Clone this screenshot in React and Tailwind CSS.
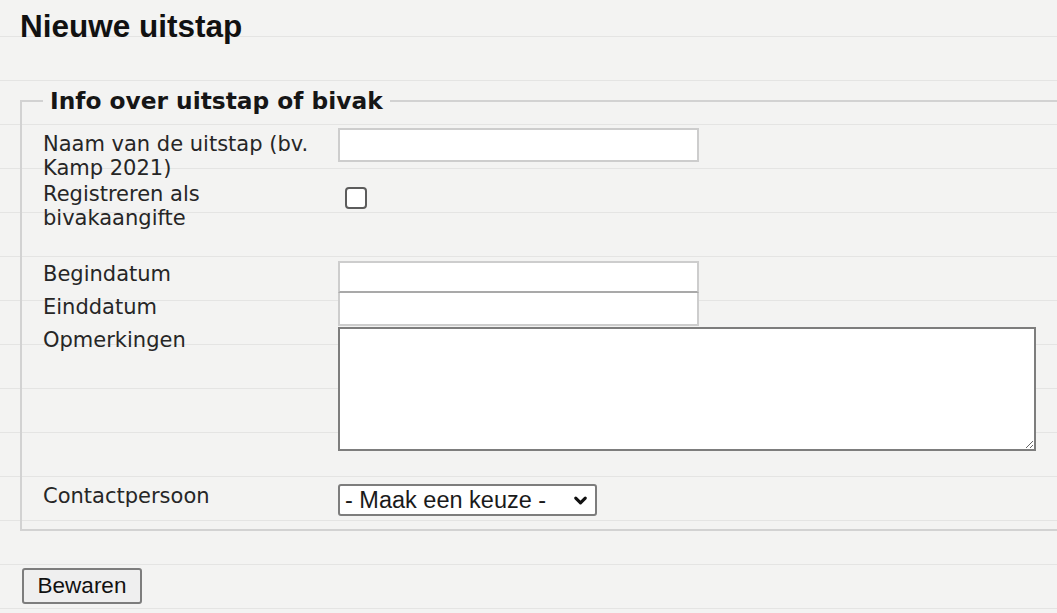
import React from "react";
import { ChevronDown } from "lucide-react";

export default function App() {
  const label = "w-[295px] shrink-0 text-[21px] leading-[24px] text-[#262626]";

  return (
    <div className="h-[613px] w-full overflow-hidden bg-[#f3f3f2] bg-[repeating-linear-gradient(to_bottom,transparent_0px,transparent_36px,#e4e4e3_36px,#e4e4e3_37px,transparent_37px,transparent_44px)] pl-[20px] font-['DejaVu_Sans',Verdana,sans-serif]">
      <h1 className="pt-[11px] font-['Liberation_Sans',Arial,sans-serif] text-[31.5px] font-bold leading-[30px] text-[#111]">
        Nieuwe uitstap
      </h1>

      <form className="mt-[46px]">
        <fieldset className="w-[1045px] border-2 border-[#d2d2d2] pb-[13px] pl-[21px]">
          <legend className="px-[7px] text-[23.3px] font-bold leading-[28px] text-[#161616]">
            Info over uitstap of bivak
          </legend>

          {/* naam */}
          <div className="mt-[13px] flex items-start">
            <label className={`${label} pt-[4px]`}>Naam van de uitstap (bv. Kamp 2021)</label>
            <input type="text" className="h-[34px] w-[361px] border-2 border-[#cdcdcd] bg-white" />
          </div>

          {/* bivak */}
          <div className="mt-[2px] flex items-start">
            <label className={label}>Registreren als bivakaangifte</label>
            <input
              type="checkbox"
              className="ml-[7px] mt-[5px] h-[22px] w-[22px] appearance-none rounded-[4px] border-2 border-[#5c5c5c] bg-white"
            />
          </div>

          {/* datums */}
          <div className="mt-[31px] flex items-start">
            <label className={`${label} pt-[1px]`}>Begindatum</label>
            <input type="text" className="h-[32px] w-[361px] border-2 border-[#cdcdcd] border-b-[#a9a9a9] bg-white" />
          </div>
          <div className="flex items-start">
            <label className={`${label} pt-[2px]`}>Einddatum</label>
            <input type="text" className="h-[33px] w-[361px] border-2 border-t-0 border-[#cdcdcd] bg-white" />
          </div>

          {/* opmerkingen */}
          <div className="mt-[1px] flex items-start">
            <label className={`${label} pt-[1px]`}>Opmerkingen</label>
            <textarea className="h-[124px] w-[698px] resize border-2 border-[#7d7d7d] bg-white" />
          </div>

          {/* contact */}
          <div className="mt-[33px] flex items-start">
            <label className={label}>Contactpersoon</label>
            <div className="relative">
              <select className="h-[32px] w-[259px] appearance-none rounded-[3px] border-2 border-[#7d7d7d] bg-white pl-[5px] font-['Liberation_Sans',Arial,sans-serif] text-[23.5px] leading-[28px] text-[#1a1a1a]">
                <option>- Maak een keuze -</option>
              </select>
              <ChevronDown
                className="pointer-events-none absolute right-[7px] top-[7px] h-[19px] w-[19px] text-[#111]"
                strokeWidth={4}
              />
            </div>
          </div>
        </fieldset>

        <button
          type="button"
          className="ml-[2px] mt-[37px] h-[36px] w-[120px] rounded-[3px] border-2 border-[#7d7d7d] bg-[#efefef] font-['Liberation_Sans',Arial,sans-serif] text-[22.5px] leading-[28px] text-[#111]"
        >
          Bewaren
        </button>
      </form>
    </div>
  );
}
